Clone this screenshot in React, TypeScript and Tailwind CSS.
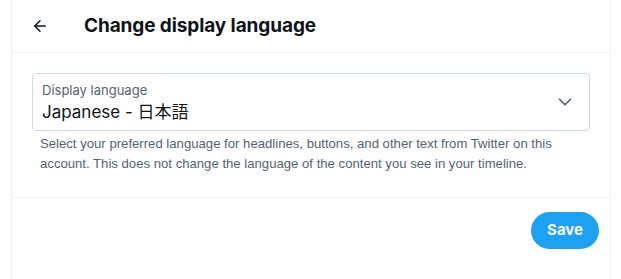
import { ArrowLeft, ChevronDown } from 'lucide-react'

export default function App() {
  return (
    <div className="h-[279px] w-[621px] bg-white font-['Inter','Noto_Sans_CJK_JP',sans-serif] text-[#0f1419]">
      <div className="ml-[11px] mr-[10px] h-full border-x border-[#eff3f4]">
        {/* header */}
        <div className="flex h-[53px] items-center border-b border-[#eff3f4] pl-[19px]">
          <ArrowLeft size={18} strokeWidth={2} className="text-[#0f1419]" />
          <h2 className="ml-[35px] text-[19px] font-bold tracking-[-0.1px]">Change display language</h2>
        </div>

        {/* select */}
        <div className="border-b border-[#eff3f4] px-[20px] pb-[23px] pt-[20px]">
          <div className="flex h-[58px] items-center justify-between rounded-[4px] border border-[#cfd9de] pl-[9px] pr-[13px]">
            <div className="flex flex-col">
              <span className="text-[13px] leading-[16px] text-[#536471]">Display language</span>
              <span className="mt-[3px] text-[17px] leading-[22px]">Japanese - 日本語</span>
            </div>
            <ChevronDown size={22} strokeWidth={1.9} className="text-[#536471]" />
          </div>
          <p className="mt-[3px] px-[8px] font-['Liberation_Sans',sans-serif] text-[13.15px] leading-[20px] text-[#536471]">
            Select your preferred language for headlines, buttons, and other text from Twitter on this
            account. This does not change the language of the content you see in your timeline.
          </p>
        </div>

        {/* footer */}
        <div className="flex justify-end px-[11px] pt-[14px]">
          <button className="h-[37px] rounded-full bg-[#1da1f2] px-[16px] text-[15px] font-bold text-white">
            Save
          </button>
        </div>
      </div>
    </div>
  )
}
